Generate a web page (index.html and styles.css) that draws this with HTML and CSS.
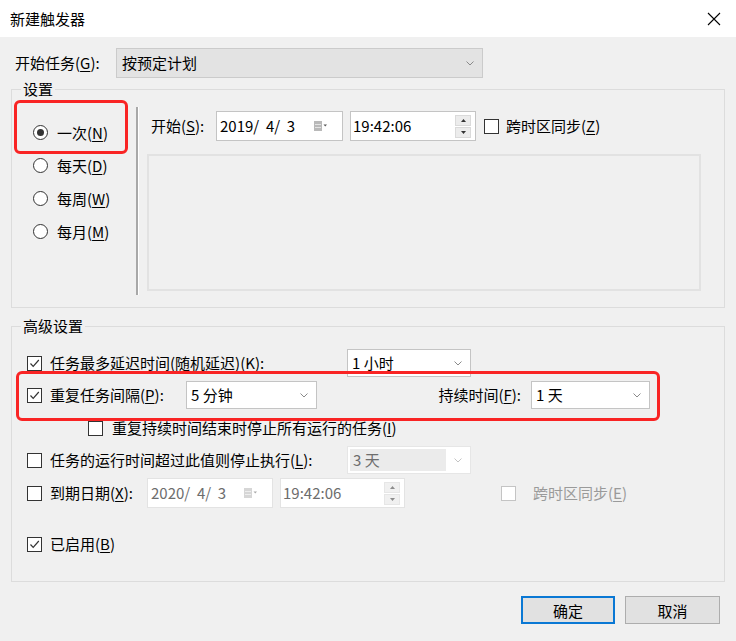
FILE: index.html
```html
<!DOCTYPE html>
<html lang="zh-CN">
<head>
<meta charset="utf-8">
<title>新建触发器</title>
<link rel="stylesheet" href="styles.css">
</head>
<body>
<div class="window">
  <div class="titlebar">
    <span class="title">新建触发器</span>
    <svg class="close" width="14" height="14" viewBox="0 0 14 14"><path d="M1 1 L13 13 M13 1 L1 13" stroke="#000" stroke-width="1.1" fill="none"/></svg>
  </div>
  <div class="content">
    <div class="begin-row">
      <span class="begin-label">开始任务(<u>G</u>):</span>
      <div class="combo combo-gray">
        <span>按预定计划</span>
        <svg class="chev" width="8" height="5" viewBox="0 0 8 5"><path d="M0.5 0.5 L4 4 L7.5 0.5" stroke="#8a8a8a" fill="none"/></svg>
      </div>
    </div>

    <fieldset class="group g1">
      <legend>设置</legend>
      <div class="g1-body">
        <div class="radios">
          <label class="radio-row"><span class="radio on"></span><span>一次(<u>N</u>)</span></label>
          <label class="radio-row"><span class="radio"></span><span>每天(<u>D</u>)</span></label>
          <label class="radio-row"><span class="radio"></span><span>每周(<u>W</u>)</span></label>
          <label class="radio-row"><span class="radio"></span><span>每月(<u>M</u>)</span></label>
        </div>
        <div class="sep"></div>
        <div class="g1-right">
          <div class="start-row">
            <span class="start-label">开始(<u>S</u>):</span>
            <div class="field date">
              <span>2019/&nbsp; 4/&nbsp; 3</span>
              <svg class="cal" width="14" height="10" viewBox="0 0 14 10"><rect x="0" y="0" width="8" height="10" fill="#b9b9b9"/><rect x="1" y="3" width="6" height="1" fill="#e4e4e4"/><rect x="1" y="6" width="6" height="1" fill="#e4e4e4"/><path d="M9.5 3.5 H13 L11.25 5.5 Z" fill="#555"/></svg>
            </div>
            <div class="field time">
              <span>19:42:06</span>
              <div class="spin">
                <span class="spin-btn"><svg width="5" height="3" viewBox="0 0 5 3"><path d="M0 3 L2.5 0 L5 3Z" fill="#333"/></svg></span>
                <span class="spin-btn"><svg width="5" height="3" viewBox="0 0 5 3"><path d="M0 0 L2.5 3 L5 0Z" fill="#333"/></svg></span>
              </div>
            </div>
            <span class="check"></span>
            <span class="check-text">跨时区同步(<u>Z</u>)</span>
          </div>
          <div class="panel"></div>
        </div>
      </div>
    </fieldset>

    <fieldset class="group g2">
      <legend>高级设置</legend>
      <div class="adv">
        <div class="arow r1">
          <span class="check on"><svg width="13" height="13" viewBox="0 0 13 13"><path d="M2.5 6.5 L5.2 9.4 L10.8 3" stroke="#333" stroke-width="1.2" fill="none"/></svg></span>
          <span class="alabel w-long">任务最多延迟时间(随机延迟)(<u>K</u>):</span>
          <div class="combo w-mid"><span>1 小时</span><svg class="chev" width="8" height="5" viewBox="0 0 8 5"><path d="M0.5 0.5 L4 4 L7.5 0.5" stroke="#8a8a8a" fill="none"/></svg></div>
        </div>
        <div class="arow r2">
          <span class="check on"><svg width="13" height="13" viewBox="0 0 13 13"><path d="M2.5 6.5 L5.2 9.4 L10.8 3" stroke="#333" stroke-width="1.2" fill="none"/></svg></span>
          <span class="alabel w-rep">重复任务间隔(<u>P</u>):</span>
          <div class="combo w-rep-combo"><span>5 分钟</span><svg class="chev" width="8" height="5" viewBox="0 0 8 5"><path d="M0.5 0.5 L4 4 L7.5 0.5" stroke="#8a8a8a" fill="none"/></svg></div>
          <span class="alabel w-dur">持续时间(<u>F</u>):</span>
          <div class="combo w-dur-combo"><span>1 天</span><svg class="chev" width="8" height="5" viewBox="0 0 8 5"><path d="M0.5 0.5 L4 4 L7.5 0.5" stroke="#8a8a8a" fill="none"/></svg></div>
        </div>
        <div class="arow r3">
          <span class="check"></span>
          <span class="alabel">重复持续时间结束时停止所有运行的任务(<u>I</u>)</span>
        </div>
        <div class="arow r4">
          <span class="check"></span>
          <span class="alabel w-long">任务的运行时间超过此值则停止执行(<u>L</u>):</span>
          <div class="combo w-mid disabled"><span class="inner">3 天</span><svg class="chev" width="8" height="5" viewBox="0 0 8 5"><path d="M0.5 0.5 L4 4 L7.5 0.5" stroke="#c4c4c4" fill="none"/></svg></div>
        </div>
        <div class="arow r5">
          <span class="check"></span>
          <span class="alabel w-exp">到期日期(<u>X</u>):</span>
          <div class="field date2 disabled">
            <span>2020/&nbsp; 4/&nbsp; 3</span>
            <svg class="cal" width="14" height="10" viewBox="0 0 14 10"><rect x="0" y="0" width="8" height="10" fill="#d6d6d6"/><rect x="1" y="3" width="6" height="1" fill="#eeeeee"/><rect x="1" y="6" width="6" height="1" fill="#eeeeee"/><path d="M9.5 3.5 H13 L11.25 5.5 Z" fill="#a8a8a8"/></svg>
          </div>
          <div class="field time2 disabled">
            <span>19:42:06</span>
            <div class="spin">
              <span class="spin-btn"><svg width="5" height="3" viewBox="0 0 5 3"><path d="M0 3 L2.5 0 L5 3Z" fill="#8c8c8c"/></svg></span>
              <span class="spin-btn"><svg width="5" height="3" viewBox="0 0 5 3"><path d="M0 0 L2.5 3 L5 0Z" fill="#8c8c8c"/></svg></span>
            </div>
          </div>
          <span class="check dis tz2"></span>
          <span class="check-text dis-text">跨时区同步(<u>E</u>)</span>
        </div>
        <div class="arow r6">
          <span class="check on"><svg width="13" height="13" viewBox="0 0 13 13"><path d="M2.5 6.5 L5.2 9.4 L10.8 3" stroke="#333" stroke-width="1.2" fill="none"/></svg></span>
          <span class="alabel">已启用(<u>B</u>)</span>
        </div>
      </div>
    </fieldset>

    <div class="buttons">
      <button class="btn primary">确定</button>
      <button class="btn">取消</button>
    </div>
  </div>
  <div class="mark mark1"></div>
  <div class="mark mark2"></div>
</div>
</body>
</html>
```

FILE: styles.css
```css
* { box-sizing: border-box; }

html, body {
  margin: 0;
  padding: 0;
}

body {
  width: 736px;
  height: 641px;
  overflow: hidden;
  background: #f0f0f0;
  font-family: "Microsoft YaHei", "Noto Sans CJK SC", "Noto Sans", sans-serif;
  font-size: 15px;
  line-height: 20px;
  color: #000;
}

u { text-decoration: underline; text-underline-offset: 2px; text-decoration-thickness: 1px; }

.window {
  position: relative;
  width: 736px;
  height: 641px;
}

.titlebar {
  height: 37px;
  background: #fff;
  display: flex;
  align-items: center;
  justify-content: space-between;
  padding: 0 15px 0 10px;
}

.title { font-size: 15px; }

.close { display: block; }

.content {
  padding: 0 11px 0 11px;
}

.begin-row {
  display: flex;
  align-items: center;
  margin-top: 11px;
  height: 30px;
}

.begin-label {
  margin-left: 4px;
  width: 101px;
}

.combo {
  display: flex;
  align-items: center;
  justify-content: space-between;
  height: 28px;
  background: #fff;
  border: 1px solid #c4c4c4;
  padding: 0 8px 0 4px;
}

.combo-gray {
  width: 367px;
  height: 30px;
  background: #e3e3e3;
  border-color: #cbcbcb;
  padding-left: 5px;
}

.chev { display: block; flex: none; }

/* group boxes */
.group {
  margin: 0;
  padding: 0;
  min-width: 0;
  border: 1px solid #dcdcdc;
}

.group legend {
  margin-left: 9px;
  padding: 0 2px;
  line-height: 16px;
  font-size: 15px;
}

.g1 { margin-top: 3px; }

.g1-body {
  display: flex;
  height: 210px;
}

.radios {
  width: 124px;
  padding: 19px 0 0 21px;
  display: flex;
  flex-direction: column;
}

.radio-row {
  display: flex;
  align-items: center;
  height: 33px;
  gap: 9px;
}

.radio {
  width: 15px;
  height: 15px;
  border: 1px solid #333;
  border-radius: 50%;
  background: #fff;
  display: flex;
  align-items: center;
  justify-content: center;
  flex: none;
}

.radio.on::after {
  content: "";
  width: 7px;
  height: 7px;
  border-radius: 50%;
  background: #333;
}

.sep {
  width: 3px;
  margin: 10px 0 12px;
  border-left: 2px solid #a8a8a8;
  border-right: 1px solid #fff;
}

.g1-right {
  padding: 14px 0 0 8px;
  display: flex;
  flex-direction: column;
}

.start-row {
  display: flex;
  align-items: center;
  height: 30px;
}

.start-label {
  margin-left: 4px;
  width: 65px;
}

.field {
  display: flex;
  align-items: center;
  justify-content: space-between;
  height: 30px;
  background: #fff;
  border: 1px solid #c4c4c4;
  padding: 0 4px 0 3px;
}

.field.date { width: 127px; padding-right: 14px; }
.field.time { width: 126px; margin-left: 7px; padding-right: 4px; padding-left: 2px; }

.cal { display: block; }

.spin {
  display: flex;
  flex-direction: column;
  gap: 1px;
}

.spin-btn {
  width: 16px;
  height: 11px;
  background: #ececec;
  border: 1px solid #dadada;
  display: flex;
  align-items: center;
  justify-content: center;
}

.spin-btn svg { display: block; }

.check {
  width: 15px;
  height: 15px;
  border: 1px solid #333;
  background: #fff;
  flex: none;
  display: flex;
  align-items: center;
  justify-content: center;
}

.check svg { display: block; }

.start-row .check { margin-left: 8px; }

.check-text { margin-left: 7px; }

.panel {
  margin-top: 13px;
  width: 554px;
  height: 137px;
  border: 2px solid #e2e2e2;
}

/* advanced */
.g2 { margin-top: 10px; }

.adv {
  display: flex;
  flex-direction: column;
  padding: 0 0 22px 15px;
}

.arow {
  display: flex;
  align-items: center;
  height: 30px;
}

.arow > .check { margin-right: 8px; }

.r1 { margin-top: 14px; }
.r2 { margin-top: 2px; }
.r3 { margin-top: 3px; padding-left: 61px; }
.r3 > .check { margin-right: 9px; }
.r4 { margin-top: 2px; }
.r5 { margin-top: 3px; }
.r6 { margin-top: 21px; }

.w-long { width: 297px; }
.w-mid { width: 124px; }
.w-rep { width: 136px; }
.w-rep-combo { width: 131px; }
.w-dur { width: 214px; text-align: right; padding-right: 10px; }
.w-dur-combo { width: 119px; }
.w-exp { width: 97px; }

.combo.disabled {
  border-color: #e6e6e6;
  padding-left: 2px;
  color: #6d6d6d;
}

.combo.disabled .inner {
  background: #ebebeb;
  width: 96px;
  height: 22px;
  line-height: 22px;
  padding-left: 3px;
}

.field.disabled {
  border-color: #e3e3e3;
  color: #6d6d6d;
}

.field.date2 { width: 126px; padding-right: 14px; }
.field.time2 { width: 125px; margin-left: 7px; padding-right: 4px; padding-left: 2px; }

.field.disabled .spin-btn {
  background: #f0f0f0;
  border-color: #e6e6e6;
}

.check.dis { border-color: #c4c4c4; }
.tz2 { margin-left: 96px; }
.dis-text { color: #9a9a9a; margin-left: 9px; }

/* buttons */
.buttons {
  display: flex;
  justify-content: flex-end;
  gap: 10px;
  margin-top: 14px;
  padding-right: 5px;
}

.btn {
  height: 28px;
  width: 95px;
  font-family: inherit;
  font-size: 15px;
  background: #e1e1e1;
  border: 1px solid #adadad;
  padding: 0;
  color: #000;
}

.btn.primary {
  width: 94px;
  border: 2px solid #0a78d4;
}

/* annotation marks */
.mark {
  position: absolute;
  border: 3px solid #f92424;
  border-radius: 6px;
}

.mark1 { left: 14px; top: 100px; width: 114px; height: 54px; }
.mark2 { left: 16px; top: 371px; width: 644px; height: 50px; }
```
